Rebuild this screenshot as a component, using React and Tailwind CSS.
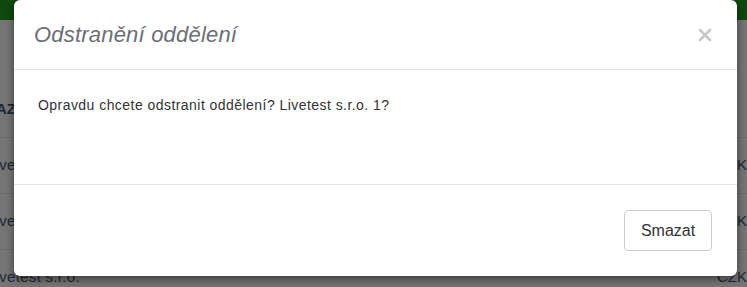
import { X } from 'lucide-react';

const rows = [
  { name: 'Livetest s.r.o. 1', cur: 'CZK' },
  { name: 'Livetest s.r.o. 2', cur: 'CZK' },
  { name: 'Livetest s.r.o.', cur: 'CZK' },
];

function Backdrop() {
  return (
    <div className="absolute inset-0 flex flex-col bg-[#757575] text-[15px] text-[#1d2733]">
      <div className="h-[20px] shrink-0 bg-[#0e4a0e]" />
      <div className="h-[62px] shrink-0" />
      {/* table header */}
      <div className="flex h-[56px] shrink-0 items-center border-b border-[#6a6a6a]">
        <span className="-ml-[4px] font-bold">AZIV</span>
      </div>
      {rows.map((r) => (
        <div
          key={r.name}
          className="flex h-[56px] shrink-0 items-center justify-between border-b border-[#6a6a6a]"
        >
          <span className="-ml-[13px] tracking-[0.3px]">{r.name}</span>
          <span>{r.cur}</span>
        </div>
      ))}
    </div>
  );
}

export default function App() {
  return (
    <div
      className="relative h-[287px] w-[747px] overflow-hidden"
      style={{ fontFamily: '"Liberation Sans", Arial, sans-serif' }}
    >
      <Backdrop />

      {/* MODAL */}
      <div className="absolute left-[14px] top-0 flex h-[276px] w-[723px] flex-col rounded-[6px] bg-white shadow-[0_3px_9px_rgba(0,0,0,0.5)]">
        <div className="flex h-[70px] shrink-0 items-center justify-between border-b border-[#e5e5e5] pl-[20px] pr-[22px]">
          <h4 className="text-[22px] italic tracking-[0.2px] text-[#6b6f75]">Odstranění oddělení</h4>
          <button className="text-[#c8c8c8]">
            <X size={20} strokeWidth={3.2} />
          </button>
        </div>

        <div className="h-[115px] shrink-0 border-b border-[#e5e5e5] pl-[24px] pt-[25px] text-[14px] tracking-[0.45px] text-[#333]">
          Opravdu chcete odstranit oddělení? Livetest s.r.o. 1?
        </div>

        <div className="flex flex-1 items-center justify-end pr-[25px]">
          <button className="h-[41px] w-[88px] rounded-[4px] border border-[#ccc] bg-white text-[16px] text-[#333]">
            Smazat
          </button>
        </div>
      </div>
    </div>
  );
}
